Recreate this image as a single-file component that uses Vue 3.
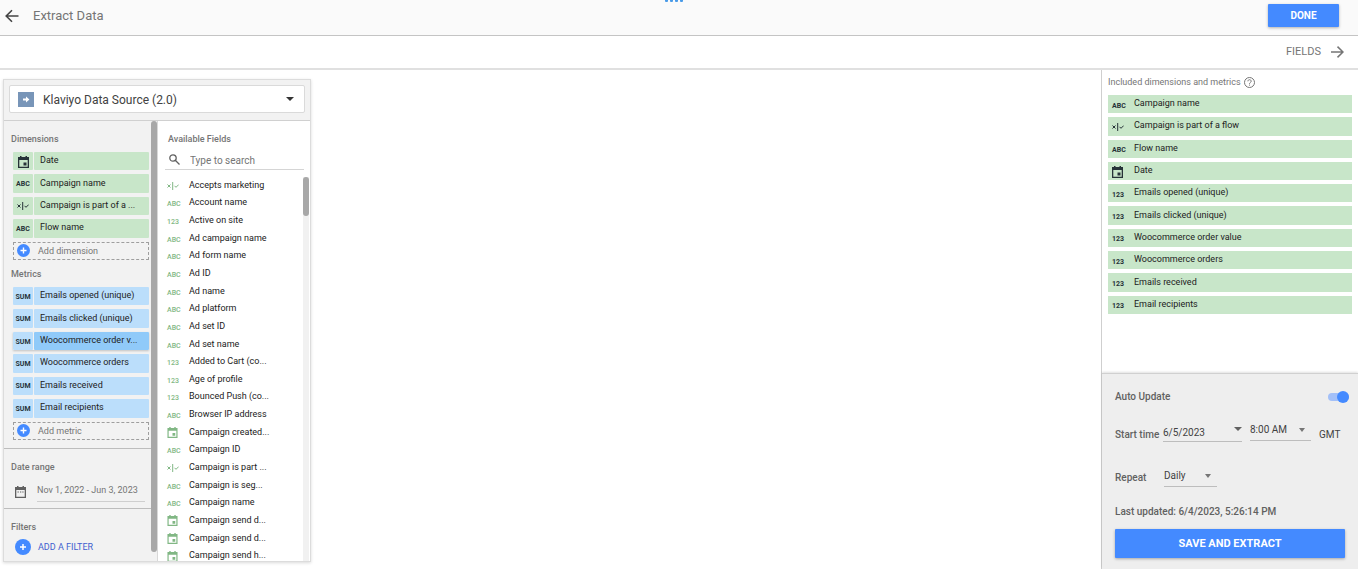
<script setup>
import { ref } from 'vue'

const dimensions = [
  { type: 'date', name: 'Date' },
  { type: 'abc', name: 'Campaign name' },
  { type: 'bool', name: 'Campaign is part of a ...' },
  { type: 'abc', name: 'Flow name' },
]
const metrics = [
  'Emails opened (unique)',
  'Emails clicked (unique)',
  'Woocommerce order v...',
  'Woocommerce orders',
  'Emails received',
  'Email recipients',
]
const activeMetric = ref(2)
const fields = [
  { type: 'bool', name: 'Accepts marketing' },
  { type: 'abc', name: 'Account name' },
  { type: 'num', name: 'Active on site' },
  { type: 'abc', name: 'Ad campaign name' },
  { type: 'abc', name: 'Ad form name' },
  { type: 'abc', name: 'Ad ID' },
  { type: 'abc', name: 'Ad name' },
  { type: 'abc', name: 'Ad platform' },
  { type: 'abc', name: 'Ad set ID' },
  { type: 'abc', name: 'Ad set name' },
  { type: 'num', name: 'Added to Cart (co...' },
  { type: 'num', name: 'Age of profile' },
  { type: 'num', name: 'Bounced Push (co...' },
  { type: 'abc', name: 'Browser IP address' },
  { type: 'date', name: 'Campaign created...' },
  { type: 'abc', name: 'Campaign ID' },
  { type: 'bool', name: 'Campaign is part ...' },
  { type: 'abc', name: 'Campaign is seg...' },
  { type: 'abc', name: 'Campaign name' },
  { type: 'date', name: 'Campaign send d...' },
  { type: 'date', name: 'Campaign send d...' },
  { type: 'date', name: 'Campaign send h...' },
]
const included = [
  { type: 'abc', name: 'Campaign name' },
  { type: 'bool', name: 'Campaign is part of a flow' },
  { type: 'abc', name: 'Flow name' },
  { type: 'date', name: 'Date' },
  { type: 'num', name: 'Emails opened (unique)' },
  { type: 'num', name: 'Emails clicked (unique)' },
  { type: 'num', name: 'Woocommerce order value' },
  { type: 'num', name: 'Woocommerce orders' },
  { type: 'num', name: 'Emails received' },
  { type: 'num', name: 'Email recipients' },
]
const labels = { abc: 'ABC', num: '123' }
const autoUpdate = ref(true)
const search = ref('')
</script>

<template>
  <div class="page">
    <header class="titlebar">
      <button class="back" aria-label="Back">
        <svg width="14" height="14" viewBox="0 0 14 14" fill="none" stroke="#444" stroke-width="1.6"><path d="M13.5 7H1.5M7 1.2L1.2 7L7 12.8" /></svg>
      </button>
      <h1>Extract Data</h1>
      <span class="dots"><i></i><i></i><i></i><i></i></span>
      <button class="primary done">DONE</button>
    </header>
    <div class="stepbar">
      <button class="fields-link">
        FIELDS
        <svg width="13" height="12" viewBox="0 0 13 12" fill="none" stroke="#757575" stroke-width="1.5"><path d="M0 6H12M6.5 .6L12 6L6.5 11.4" /></svg>
      </button>
    </div>

    <main class="body">
      <section class="panel">
        <div class="source-row">
          <label class="source">
            <svg class="source-icon" width="16" height="15" viewBox="0 0 16 15"><path fill="#7895b8" d="M0 0h16v15H0z" /><path fill="#fff" d="M5 6.500h3V4.400l3.400 3.100L8 10.600V8.500H5z" /></svg>
            <select aria-label="Data source"><option>Klaviyo Data Source (2.0)</option></select>
            <svg class="caret" width="8" height="4" viewBox="0 0 8 4"><path fill="#333" d="M0 0h8L4 4z" /></svg>
          </label>
        </div>
        <div class="columns">
          <div class="setup">
            <div class="setup-scroll">
              <div class="group fieldsets">
                <h2>Dimensions</h2>
                <ul class="chips dims">
                  <li v-for="d in dimensions" :key="d.name" class="chip green">
                    <span class="kind">
                      <svg v-if="d.type === 'date'" width="11" height="12" viewBox="0 0 11 12"><path fill="currentColor" fill-rule="evenodd" d="M2 0h1.500v1h4V0H9v1h2v11H0V1h2zM1.300 4v6.700h8.400V4zM5.500 6.500h3v3h-3z" /></svg>
                      <svg v-else-if="d.type === 'bool'" width="12" height="8" viewBox="0 0 12 8" fill="none" stroke="currentColor"><path d="M.5 2.500l3 3M3.500 2.500l-3 3M5.700 0v8M7.500 3.800l1.500 1.500L11.700 2.600" /></svg>
                      <b v-else>{{ labels[d.type] }}</b>
                    </span>
                    <span class="name">{{ d.name }}</span>
                  </li>
                  <li class="add"><button><svg width="13" height="13" viewBox="0 0 13 13"><circle cx="6.500" cy="6.500" r="6.500" fill="#448aff" /><path stroke="#fff" stroke-width="1.400" d="M6.500 3.500v6M3.500 6.500h6" /></svg>Add dimension</button></li>
                </ul>
                <h2 class="second">Metrics</h2>
                <ul class="chips mets">
                  <li v-for="(m, i) in metrics" :key="m" class="chip blue" :class="{ active: i === activeMetric }">
                    <span class="kind"><b>SUM</b></span>
                    <span class="name">{{ m }}</span>
                  </li>
                  <li class="add"><button><svg width="13" height="13" viewBox="0 0 13 13"><circle cx="6.500" cy="6.500" r="6.500" fill="#448aff" /><path stroke="#fff" stroke-width="1.400" d="M6.500 3.500v6M3.500 6.500h6" /></svg>Add metric</button></li>
                </ul>
              </div>
              <div class="group range">
                <h2>Date range</h2>
                <div class="range-row">
                  <svg width="11" height="12" viewBox="0 0 11 12"><path fill="#616161" fill-rule="evenodd" d="M2 0h1.500v1h4V0H9v1h2v11H0V1h2zM1.300 4v6.700h8.400V4zM2.500 5.500h1.300v1H2.500zM5 5.500h1.300v1H5zM7.300 5.500h1.300v1H7.300z" /></svg>
                  <button>Nov 1, 2022 - Jun 3, 2023</button>
                </div>
              </div>
              <div class="group filters">
                <h2>Filters</h2>
                <button class="add-filter"><svg width="16" height="16" viewBox="0 0 16 16"><circle cx="8" cy="8" r="8" fill="#448aff" /><path stroke="#fff" stroke-width="1.500" d="M8 5v6M5 8h6" /></svg>ADD A FILTER</button>
              </div>
            </div>
            <div class="bar"><i></i></div>
          </div>
          <div class="available">
            <h2>Available Fields</h2>
            <label class="search">
              <svg width="11" height="11" viewBox="0 0 11 11" fill="none" stroke="#616161" stroke-width="1.300"><circle cx="4" cy="4" r="3.200" /><path d="M6.500 6.500l4 4" /></svg>
              <input v-model="search" type="text" placeholder="Type to search" aria-label="Search fields" />
            </label>
            <div class="list-wrap">
              <ul class="list">
                <li v-for="(f, i) in fields" :key="i">
                  <span class="kind">
                    <svg v-if="f.type === 'date'" width="11" height="11" viewBox="0 0 11 12"><path fill="currentColor" fill-rule="evenodd" d="M2 0h1.500v1h4V0H9v1h2v11H0V1h2zM1.300 4v6.700h8.400V4zM5.500 6.500h3v3h-3z" /></svg>
                    <svg v-else-if="f.type === 'bool'" width="12" height="8" viewBox="0 0 12 8" fill="none" stroke="currentColor"><path d="M.5 2.500l3 3M3.500 2.500l-3 3M5.700 0v8M7.500 3.800l1.500 1.500L11.700 2.600" /></svg>
                    <b v-else>{{ labels[f.type] }}</b>
                  </span>
                  <span class="name">{{ f.name }}</span>
                </li>
              </ul>
              <div class="thin-bar"><i></i></div>
            </div>
          </div>
        </div>
      </section>

      <aside class="side">
        <section class="included">
          <h2>Included dimensions and metrics
            <svg width="11" height="11" viewBox="0 0 11 11" fill="none" stroke="#757575"><circle cx="5.500" cy="5.500" r="5" /><path d="M3.900 4.300c0-2.200 3.300-2.100 3.300 0 0 1.200-1.700 1.200-1.700 2.500M5.500 7.600v1" /></svg>
          </h2>
          <ul>
            <li v-for="f in included" :key="f.name">
              <span class="kind">
                <svg v-if="f.type === 'date'" width="11" height="12" viewBox="0 0 11 12"><path fill="currentColor" fill-rule="evenodd" d="M2 0h1.500v1h4V0H9v1h2v11H0V1h2zM1.300 4v6.700h8.400V4zM5.500 6.500h3v3h-3z" /></svg>
                <svg v-else-if="f.type === 'bool'" width="12" height="8" viewBox="0 0 12 8" fill="none" stroke="currentColor"><path d="M.5 2.500l3 3M3.500 2.500l-3 3M5.700 0v8M7.500 3.800l1.500 1.500L11.700 2.600" /></svg>
                <b v-else>{{ labels[f.type] }}</b>
              </span>
              <span class="name">{{ f.name }}</span>
            </li>
          </ul>
        </section>
        <section class="schedule">
          <div class="auto">
            <label for="auto">Auto Update</label>
            <input id="auto" v-model="autoUpdate" type="checkbox" class="switch" />
          </div>
          <div class="when">
            <label for="start">Start time</label>
            <span class="drop date"><select id="start"><option>6/5/2023</option></select><svg width="8" height="4" viewBox="0 0 8 4"><path fill="#616161" d="M0 0h8L4 4z" /></svg></span>
            <span class="drop time"><select aria-label="Start hour"><option>8:00 AM</option></select><svg width="6" height="4" viewBox="0 0 6 4"><path fill="#757575" d="M0 0h6L3 4z" /></svg></span>
            <span class="zone">GMT</span>
          </div>
          <div class="repeat">
            <label for="repeat">Repeat</label>
            <span class="drop every"><select id="repeat"><option>Daily</option></select><svg width="6" height="4" viewBox="0 0 6 4"><path fill="#757575" d="M0 0h6L3 4z" /></svg></span>
          </div>
          <p>Last updated: 6/4/2023, 5:26:14 PM</p>
          <button class="primary save">SAVE AND EXTRACT</button>
        </section>
      </aside>
    </main>
  </div>
</template>

<style>
body { margin: 0; background: #fff; }
</style>

<style scoped>
* { box-sizing: border-box; }
.page { height: 100vh; display: flex; flex-direction: column; overflow: hidden; font-family: Roboto, "Liberation Sans", sans-serif; font-size: 9px; color: #212121; }
button, select, input { font: inherit; color: inherit; background: none; border: 0; padding: 0; margin: 0; outline: 0; border-radius: 0; }
button { cursor: pointer; }
select { appearance: none; }
h1, h2, p, ul { margin: 0; padding: 0; font-weight: 400; }
ul { list-style: none; }
svg { display: block; flex: none; }
h2 { font-size: 9px; line-height: 12px; font-weight: 500; color: #757575; }

.titlebar { position: relative; flex: none; display: flex; align-items: center; height: 36px; padding: 0 19px 4px 5px; background: #fafafa; border-bottom: 1px solid #c4c4c4; }
h1 { flex: 1; margin-left: 14px; font-size: 13px; line-height: 16px; color: #757575; }
.dots { position: absolute; top: 0; left: 50%; display: flex; gap: 2px; margin-left: -14px; }
.dots i { width: 3px; height: 2px; background: #4a9be8; border-radius: 0 0 1px 1px; }
.primary { background: #448aff; color: #fff; font-weight: 700; border-radius: 1px; box-shadow: 0 1px 3px rgba(0, 0, 0, .3); }
.done { width: 71px; height: 23px; font-size: 10px; }
.stepbar { flex: none; display: flex; justify-content: flex-end; height: 34px; padding: 0 14px 1px; border-bottom: 2px solid #e0e0e0; }
.fields-link { display: flex; align-items: center; gap: 10px; font-size: 11px; color: #757575; }

.body { flex: 1; min-height: 0; display: flex; justify-content: space-between; }
.panel { width: 308px; margin: 9px 0 7px 3px; display: flex; flex-direction: column; background: #f2f2f2; border: 1px solid #dcdcdc; box-shadow: 0 1px 3px rgba(0, 0, 0, .15); }
.source-row { padding: 5px 5px 7px; border-bottom: 1px solid #d0d0d0; }
.source { display: flex; align-items: center; height: 28px; padding: 0 10px 0 8px; background: #fff; border: 1px solid #dadada; border-radius: 2px; }
.source select { flex: 1; margin-left: 9px; padding-top: 1px; font-size: 12px; color: #424242; }
.columns { flex: 1; min-height: 0; display: flex; }
.setup { width: 154px; display: flex; border-right: 1px solid #d8d8d8; }
.setup-scroll { flex: 1; overflow: hidden; }
.group { padding: 0 2px 0 7px; border-bottom: 1px solid #bdbdbd; }
.group:last-child { border-bottom: 0; }
.bar { width: 6px; }
.bar i { display: block; height: 98%; background: #a8a8a8; border-radius: 3px; }
.fieldsets { padding-top: 12px; padding-bottom: 8px; }
.chips { display: grid; grid-auto-rows: 1fr; row-gap: 4px; margin: 7px 0 0 2px; }
.dims { min-height: 108px; }
.mets { min-height: 153px; }
.second { margin-top: 8px; }
.chip { display: grid; grid-template-columns: 20px 1fr; column-gap: 1px; }
.chip span { display: flex; align-items: center; border-radius: 1px; }
.kind b { font-size: 7px; line-height: 8px; font-weight: 700; }
.chip .kind { justify-content: center; padding-top: 1px; color: #263238; }
.chip .name { padding: 0 0 2px 6px; white-space: nowrap; color: #212121; }
.green span { background: #c8e6c9; }
.blue span { background: #bbdefb; }
.active { box-shadow: 0 1px 2px rgba(0, 0, 0, .2); }
.active .name { background: #90caf9; }
.add button { display: flex; align-items: center; gap: 8px; width: 100%; height: 100%; padding-left: 3px; border: 1px dashed #9e9e9e; color: #757575; }
.range { padding-top: 12px; padding-bottom: 6px; }
.range-row { display: flex; align-items: center; gap: 11px; padding: 8px 4px 0 4px; }
.range-row button { flex: 1; height: 21px; padding-bottom: 2px; text-align: left; color: #757575; border-bottom: 1px solid #cfcfcf; white-space: nowrap; }
.filters { padding-top: 12px; }
.add-filter { display: flex; align-items: center; gap: 7px; margin: 6px 0 0 4px; color: #3f5fcf; }

.available { flex: 1; min-width: 0; display: flex; flex-direction: column; padding: 12px 1px 0 0; background: #fff; }
.available h2 { margin-left: 10px; }
.search { display: flex; align-items: center; gap: 10px; height: 19px; margin: 6px 5px 0 7px; padding: 0 0 1px 4px; border-bottom: 1px solid #d5d5d5; }
.search input { flex: 1; min-width: 0; padding-top: 2px; font-size: 10px; }
.search input::placeholder { color: #757575; opacity: 1; }
.list-wrap { flex: 1; min-height: 0; margin-top: 7px; display: flex; overflow: hidden; }
.list { flex: 1; display: grid; grid-auto-rows: 1fr; height: 388px; }
.list li { display: grid; grid-template-columns: 22px 1fr; padding: 0 0 2px 9px; align-items: center; color: #212121; white-space: nowrap; }
.list .kind { color: #81b784; padding-top: 2px; }
.list .kind b { font-weight: 500; }
.thin-bar { width: 6px; background: #f1f1f1; }
.thin-bar i { display: block; height: 39px; background: #a8a8a8; border-radius: 3px; }

.side { width: 257px; display: flex; flex-direction: column; border-left: 1px solid #cfcfcf; }
.included { flex: 1; padding: 6px; }
.included h2 { display: flex; align-items: center; gap: 3px; font-weight: 400; line-height: 13px; }
.included ul { display: grid; grid-auto-rows: 1fr; row-gap: 4px; min-height: 219px; margin-top: 6px; }
.included li { display: grid; grid-template-columns: 22px 1fr; padding-left: 4px; align-items: center; background: #c8e6c9; }
.included .kind { padding-top: 1px; color: #263238; }
.included .name { padding-bottom: 2px; }

.schedule { padding: 16px 13px 11px; background: #eee; border-top: 1px solid #d0d0d0; box-shadow: 0 -1px 2px rgba(0, 0, 0, .12); color: #616161; font-size: 10px; line-height: 14px; }
.schedule label, .schedule p { font-weight: 500; }
.auto { display: flex; justify-content: space-between; align-items: center; margin-right: -4px; }
.switch { appearance: none; display: flex; align-items: center; width: 21px; height: 8px; background: #a3c0f8; border-radius: 4px; }
.switch::before { content: ""; width: 12px; height: 12px; border-radius: 50%; background: #448aff; }
.switch:checked { justify-content: flex-end; }
.when { display: flex; align-items: flex-end; margin-top: 15px; }
.drop { display: flex; align-items: center; height: 22px; border-bottom: 1px solid #bdbdbd; color: #424242; }
.drop select { flex: 1; min-width: 0; }
.when label { width: 48px; }
.date { width: 79px; }
.date select { padding-top: 4px; }
.date svg { margin-bottom: 4px; }
.time { width: 61px; margin: 0 8px 1px; padding-right: 6px; }
.zone { color: #424242; }
.repeat { display: flex; align-items: center; margin-top: 23px; }
.repeat label { width: 49px; padding-top: 3px; }
.every { width: 53px; padding-right: 6px; }
.schedule p { margin-top: 18px; }
.save { display: block; width: 100%; height: 29px; margin-top: 10px; font-size: 11px; }
</style>
